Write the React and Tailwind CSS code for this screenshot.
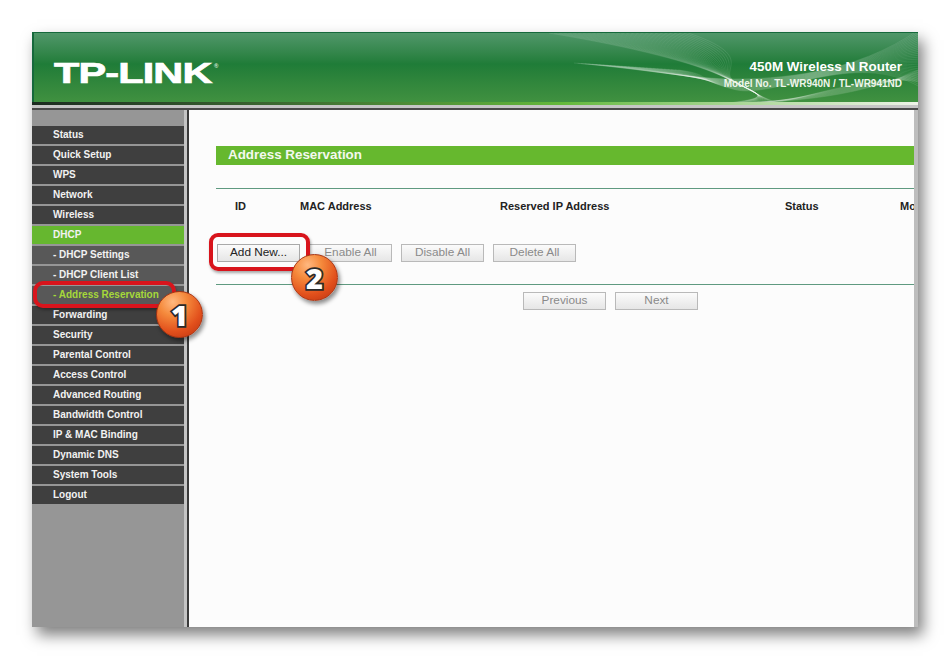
const nav = [
  ["Status", "main"],
  ["Quick Setup", "main"],
  ["WPS", "main"],
  ["Network", "main"],
  ["Wireless", "main"],
  ["DHCP", "active"],
  ["- DHCP Settings", "sub"],
  ["- DHCP Client List", "sub"],
  ["- Address Reservation", "cur"],
  ["Forwarding", "main"],
  ["Security", "main"],
  ["Parental Control", "main"],
  ["Access Control", "main"],
  ["Advanced Routing", "main"],
  ["Bandwidth Control", "main"],
  ["IP & MAC Binding", "main"],
  ["Dynamic DNS", "main"],
  ["System Tools", "main"],
  ["Logout", "main"],
];

function NavItem({ label, kind }) {
  const bg = kind === "active" ? "bg-[#66b72f]" : kind === "main" ? "bg-[#3f3f3f]" : "bg-[#585858]";
  const color = kind === "cur" ? "text-[#a6d83a]" : "text-[#f2f2f2]";
  return (
    <div className={`h-[18px] flex items-center pb-[1px] pl-[21px] text-[10px] font-bold leading-none ${bg} ${color}`}>
      {label}
    </div>
  );
}

function Btn({ children, on }) {
  return (
    <div
      className={`w-[83px] h-[18px] flex items-center justify-center text-[11.8px] leading-none border bg-gradient-to-b from-[#fbfbfb] to-[#e6e6e6] ${
        on ? "border-[#a9a9a9] text-[#222222]" : "border-[#b9b9b9] text-[#8a8a8a]"
      }`}
    >
      {children}
    </div>
  );
}

function Waves() {
  const lines = [];
  for (let i = 0; i < 30; i++) {
    // bundle falling from the top edge to the bottom edge
    lines.push(<path key={"a" + i} d={`M${515 + i * 4.8} 0 C ${600 + i * 4.2} ${14 + i * 0.3} ${660 + i * 0.9} ${30 + i * 0.2} ${690 + i * 0.3} ${44 + i * 0.1} S ${725 + i * 0.9} 64 ${745 - i * 1.8} 70`} />);
    // bundle rising from the convergence point to the right edge
    lines.push(<path key={"b" + i} d={`M${540 + i * 3.6} ${30 + i * 0.24} C ${610 + i * 2.4} ${36 + i * 0.2} ${660} ${46} ${700} ${46 + i * 0.36} S ${820} ${42 - i * 0.9} 886 ${-4 + i * 2}`} />);
    // low bundle towards the bottom right
    if (i < 14) lines.push(<path key={"c" + i} d={`M${690 + i * 4} 70 C 780 ${70 - i * 0.6} 840 ${58 - i * 1.3} 886 ${36 + i}`} />);
  }
  return (
    <svg className="absolute inset-0" width="886" height="70" viewBox="0 0 886 70" fill="none" stroke="#ffffff" strokeOpacity="0.2" strokeWidth="0.5">
      {lines}
    </svg>
  );
}

function Badge({ n, className }) {
  return (
    <div
      className={`absolute w-[47px] h-[47px] rounded-full flex items-center justify-center border border-[#a83412] bg-[radial-gradient(circle_at_35%_22%,#ffb880_0%,#f58a3c_30%,#e2501c_65%,#b8300f_100%)] shadow-[2px_3px_4px_rgba(0,0,0,0.45)] ${className}`}
    >
      <span className="text-[29px] font-black leading-none text-white [-webkit-text-stroke:3.5px_#2a2a2a] [paint-order:stroke_fill] font-['Open_Sans','Liberation_Sans',sans-serif]">
        {n}
      </span>
    </div>
  );
}

export default function App() {
  return (
    <div className="w-[950px] h-[659px] bg-white pt-[32px] pl-[32px] font-['Liberation_Sans',Arial,sans-serif] relative overflow-hidden">
      <div className="w-[886px] h-[595px] flex flex-col shadow-[5px_8px_14px_rgba(0,0,0,0.5)] bg-[#fafafa]">
        {/* Header */}
        <div className="relative h-[70px] shrink-0 border-l-2 border-t border-[#16693c] bg-gradient-to-b from-[#50976a] via-[#1f7c38] via-45% to-[#409140] overflow-hidden">
          <Waves />
          <div className="absolute left-[20px] top-[21px] flex items-start whitespace-nowrap text-white font-bold">
            <span className="text-[29px] leading-[38px] origin-left scale-x-[1.43] tracking-[-0.6px] w-[111px] [-webkit-text-stroke:0.7px_#ffffff]">TP-LINK</span>
            <span className="text-[6px] leading-none ml-[49px] mt-[9px] text-[#d8e8d8]">®</span>
          </div>
          <div className="absolute right-[16px] top-[26px] text-right font-bold text-white">
            <div className="text-[13.4px] leading-[16px]">450M Wireless N Router</div>
            <div className="text-[10px] leading-[16px] mt-[1px] text-[#eef5ea]">Model No. TL-WR940N / TL-WR941ND</div>
          </div>
        </div>
        <div className="h-[3px] shrink-0 bg-gradient-to-r from-[#1c2b20] via-[#64b93a] via-60% to-[#eef3e8]" />
        <div className="h-[3px] bg-[#c6c6c6] shrink-0" />
        <div className="h-[2px] bg-[#4a4a4a] shrink-0" />
        {/* Body */}
        <div className="flex-1 flex min-h-0">
          <div className="w-[152px] shrink-0 bg-[#969696] pt-[16px] flex flex-col gap-[2px]">
            {nav.map(([l, k]) => (
              <NavItem key={l} label={l} kind={k} />
            ))}
          </div>
          <div className="w-[3px] bg-[#c4c4c4] shrink-0" />
          <div className="w-[2px] bg-[#3a3a3a] shrink-0" />
          <div className="flex-1 min-w-0 overflow-hidden bg-[#fcfcfc] pl-[27px] pt-[36px]">
            <div className="h-[19px] bg-[#66b82e] flex items-center pl-[12px] text-[13.4px] font-bold text-[#f4f9ee] whitespace-nowrap">
              Address Reservation
            </div>
            <div className="h-px bg-[#5f9a80] mt-[23px]" />
            <div className="flex h-[34px] items-center text-[11px] font-bold text-[#222222] whitespace-nowrap">
              <span className="w-[84px] shrink-0 pl-[19px]">ID</span>
              <span className="w-[200px] shrink-0">MAC Address</span>
              <span className="w-[285px] shrink-0">Reserved IP Address</span>
              <span className="w-[115px] shrink-0">Status</span>
              <span>Modify</span>
            </div>
            <div className="flex gap-[9px] mt-[21px] pl-[1px]">
              <Btn on>Add New...</Btn>
              <Btn>Enable All</Btn>
              <Btn>Disable All</Btn>
              <Btn>Delete All</Btn>
            </div>
            <div className="h-px bg-[#5f9a80] mt-[22px]" />
            <div className="flex gap-[9px] mt-[7px] pl-[307px]">
              <Btn>Previous</Btn>
              <Btn>Next</Btn>
            </div>
          </div>
          <div className="w-[4px] bg-[#bdbdbd] shrink-0" />
        </div>
      </div>

      {/* Annotations */}
      <div className="absolute left-[33px] top-[281px] w-[143px] h-[27px] rounded-[10px] border-[4px] border-[#d8141c] shadow-[1px_2px_3px_rgba(0,0,0,0.35)]" />
      <div className="absolute left-[209px] top-[233px] w-[101px] h-[38px] rounded-[9px] border-[4px] border-[#d8141c] shadow-[1px_2px_3px_rgba(0,0,0,0.35)]" />
      <Badge n="1" className="left-[156px] top-[291px]" />
      <Badge n="2" className="left-[291px] top-[254px]" />
    </div>
  );
}
